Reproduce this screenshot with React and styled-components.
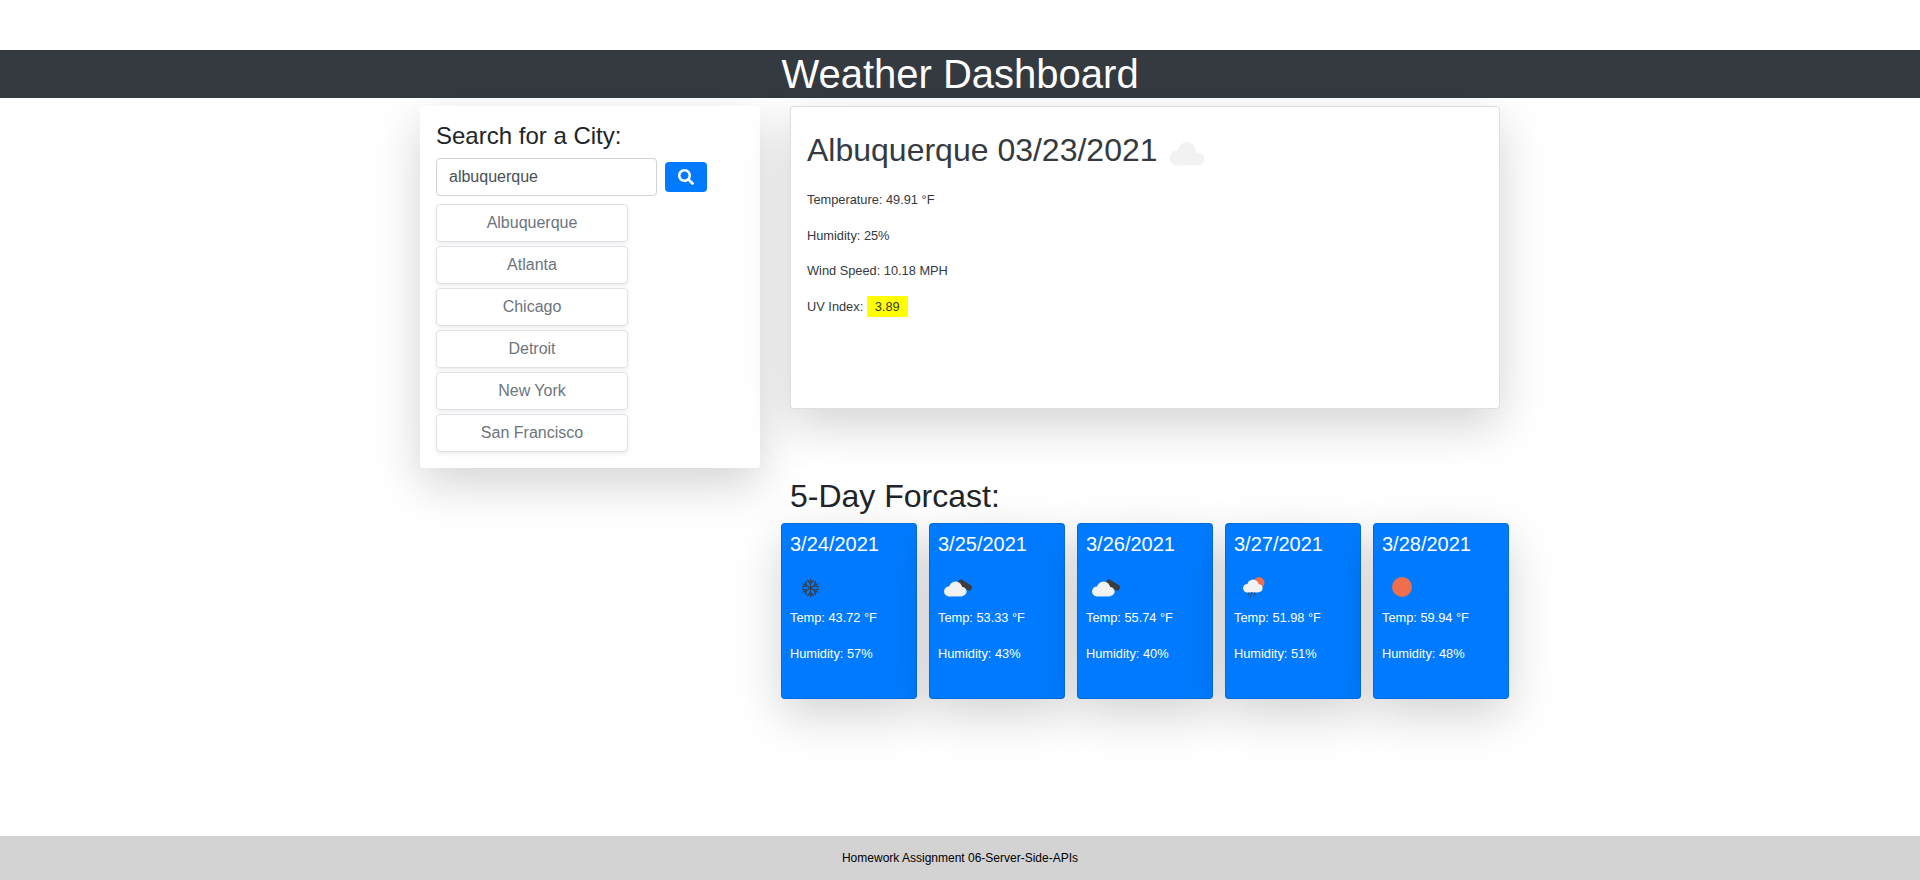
import React from 'react';
import styled, { createGlobalStyle } from 'styled-components';
import { FaSearch } from 'react-icons/fa';

const GlobalStyle = createGlobalStyle`
  html, body {
    margin: 0;
    background: #fff;
    font-family: "Liberation Sans", Arial, sans-serif;
    color: #212529;
  }
  * { box-sizing: border-box; }
`;

const shadowLg = '0 16px 48px rgba(0, 0, 0, 0.175)';

const Page = styled.div`
  min-height: 100vh;
  display: flex;
  flex-direction: column;
  padding-top: 50px;
`;
const Header = styled.header`
  height: 48px;
  background: #343a40;
  color: #fff;
  font-size: 40px;
  line-height: 48px;
  text-align: center;
`;
const Main = styled.main`
  flex: 1;
  display: grid;
  grid-template-columns: 340px 728px;
  column-gap: 21px;
  justify-content: center;
  align-content: start;
  padding: 8px 0 0 9px;
`;
const SearchPanel = styled.section`
  align-self: start;
  height: 362px;
  padding: 16px;
  background: #fff;
  border-radius: 4px;
  box-shadow: ${shadowLg};
`;
const SearchTitle = styled.h2`
  margin: 0 0 7px;
  font-size: 24px;
  font-weight: 400;
  line-height: 28.8px;
`;
const SearchRow = styled.form`
  display: flex;
  align-items: center;
  gap: 8px;
  margin-bottom: 8px;
`;
const SearchInput = styled.input`
  width: 221px;
  height: 38px;
  padding: 6px 12px;
  border: 1px solid #ced4da;
  border-radius: 4px;
  color: #495057;
  font: 16px "Liberation Sans", Arial, sans-serif;
`;
const SearchButton = styled.button`
  width: 42px;
  height: 30px;
  display: flex;
  align-items: center;
  justify-content: center;
  padding: 0;
  border: 0;
  border-radius: 4px;
  background: #007bff;
  color: #fff;
  font-size: 16px;
`;
const CityList = styled.div`
  display: flex;
  flex-direction: column;
  gap: 4px;
`;
const CityButton = styled.button`
  width: 192px;
  height: 38px;
  padding: 0;
  background: #fff;
  border: 1px solid #dee2e6;
  border-radius: 4px;
  box-shadow: 0 2px 4px rgba(0, 0, 0, 0.075);
  color: #6c757d;
  font: 16px "Liberation Sans", Arial, sans-serif;
`;
const RightColumn = styled.div`
  display: flex;
  flex-direction: column;
`;
const CurrentCard = styled.section`
  height: 303px;
  margin: 0 9px 68px 9px;
  padding: 24px 16px 0;
  background: #fff;
  border: 1px solid rgba(0, 0, 0, 0.125);
  border-radius: 4px;
  box-shadow: ${shadowLg};
  color: #343a40;
`;
const CityHeading = styled.h1`
  display: flex;
  align-items: center;
  gap: 11px;
  margin: 0 0 21px;
  font-size: 32px;
  font-weight: 400;
  line-height: 38.4px;
`;
const HeroIcon = styled.svg`
  width: 36px;
  height: 24px;
  margin-top: 8px;
`;
const Line = styled.p`
  margin: 0 0 16px;
  font-size: 12.8px;
  line-height: 19.2px;
`;
const UvBadge = styled.span`
  display: inline-block;
  padding: 1px 8px;
  background: #ff0;
`;
const ForecastTitle = styled.h2`
  margin: 0 0 8px 9px;
  font-size: 32px;
  font-weight: 400;
  line-height: 38.4px;
`;
const ForecastRow = styled.div`
  display: flex;
  gap: 12px;
`;
const DayCard = styled.article`
  width: 136px;
  height: 176px;
  padding: 8px;
  background: #007bff;
  border: 1px solid rgba(0, 0, 0, 0.125);
  border-radius: 4px;
  box-shadow: ${shadowLg};
  color: #fff;
`;
const DayDate = styled.h5`
  margin: 0 0 10px;
  font-size: 20px;
  font-weight: 400;
  line-height: 24px;
`;
const DayIcon = styled.svg`
  display: block;
  width: 42px;
  height: 42px;
  margin-left: -1px;
`;
const Footer = styled.footer`
  height: 44px;
  background: #d3d3d3;
  color: #000;
  font-size: 12px;
  line-height: 44px;
  text-align: center;
`;

// cloud made of one base bar and two bumps
const Cloud = ({ x, y, scale = 1, color }) => (
  <g transform={`translate(${x} ${y}) scale(${scale})`} fill={color}>
    <circle cx="5" cy="9" r="4.5" />
    <circle cx="11" cy="6" r="6" />
    <circle cx="17" cy="9" r="4" />
    <rect x="5" y="8" width="12" height="5.5" />
  </g>
);

const Snow = () => (
  <DayIcon viewBox="0 0 42 42">
    <g stroke="#3a3f4a" strokeWidth="1.4" strokeLinecap="round" fill="none">
      {[0, 60, 120, 180, 240, 300].map(angle => (
        <path key={angle} transform={`rotate(${angle} 21.5 22)`} d="M21.5 22v-8.5M18.6 14.6l2.9 2.9 2.9-2.9" />
      ))}
    </g>
  </DayIcon>
);

const Clouds = () => (
  <DayIcon viewBox="0 0 42 42">
    <path d="M24 16.5l8 5" stroke="#3d3d3d" strokeWidth="6" strokeLinecap="round" />
    <Cloud x={6.5} y={15.6} scale={1.1} color="#f2f2f2" />
  </DayIcon>
);

const Rain = () => (
  <DayIcon viewBox="0 0 42 42">
    <circle cx="26" cy="16.6" r="5.5" fill="#ee6e4d" />
    <Cloud x={9.6} y={13.6} scale={0.95} color="#f2f2f2" />
    <g stroke="#3d4654" strokeWidth="1.2" strokeLinecap="round">
      <path d="M16 27l-.7 1.6M19 26.6l-.7 1.6M22 27l-.7 1.6M17.5 30l-.5 1M21 30l-.5 1" />
    </g>
  </DayIcon>
);

const Sun = () => (
  <DayIcon viewBox="0 0 42 42">
    <circle cx="21" cy="21" r="10" fill="#ee6e4d" />
  </DayIcon>
);

const cities = ['Albuquerque', 'Atlanta', 'Chicago', 'Detroit', 'New York', 'San Francisco'];

const days = [
  { date: '3/24/2021', icon: <Snow />, temp: '43.72', humidity: '57' },
  { date: '3/25/2021', icon: <Clouds />, temp: '53.33', humidity: '43' },
  { date: '3/26/2021', icon: <Clouds />, temp: '55.74', humidity: '40' },
  { date: '3/27/2021', icon: <Rain />, temp: '51.98', humidity: '51' },
  { date: '3/28/2021', icon: <Sun />, temp: '59.94', humidity: '48' },
];

const App = () => {
  return (
    <Page>
      <GlobalStyle />
      <Header>Weather Dashboard</Header>

      <Main>
        <SearchPanel>
          <SearchTitle>Search for a City:</SearchTitle>
          <SearchRow onSubmit={e => e.preventDefault()}>
            <SearchInput defaultValue="albuquerque" />
            <SearchButton aria-label="Search"><FaSearch /></SearchButton>
          </SearchRow>
          <CityList>
            {cities.map(city => <CityButton key={city}>{city}</CityButton>)}
          </CityList>
        </SearchPanel>

        <RightColumn>
          <CurrentCard>
            <CityHeading>
              Albuquerque 03/23/2021
              <HeroIcon viewBox="0 0 36 24">
                <g fill="#f2f2f2">
                  <circle cx="8" cy="16" r="7.5" />
                  <circle cx="18" cy="9" r="9" />
                  <circle cx="29" cy="17" r="6.5" />
                  <rect x="8" y="14" width="21" height="9.5" />
                </g>
              </HeroIcon>
            </CityHeading>
            <Line>Temperature: 49.91 °F</Line>
            <Line>Humidity: 25%</Line>
            <Line>Wind Speed: 10.18 MPH</Line>
            <Line>UV Index: <UvBadge>3.89</UvBadge></Line>
          </CurrentCard>

          <ForecastTitle>5-Day Forcast:</ForecastTitle>
          <ForecastRow>
            {days.map(day => (
              <DayCard key={day.date}>
                <DayDate>{day.date}</DayDate>
                {day.icon}
                <Line>Temp: {day.temp} °F</Line>
                <Line>Humidity: {day.humidity}%</Line>
              </DayCard>
            ))}
          </ForecastRow>
        </RightColumn>
      </Main>

      <Footer>Homework Assignment 06-Server-Side-APIs</Footer>
    </Page>
  );
};

export default App;
